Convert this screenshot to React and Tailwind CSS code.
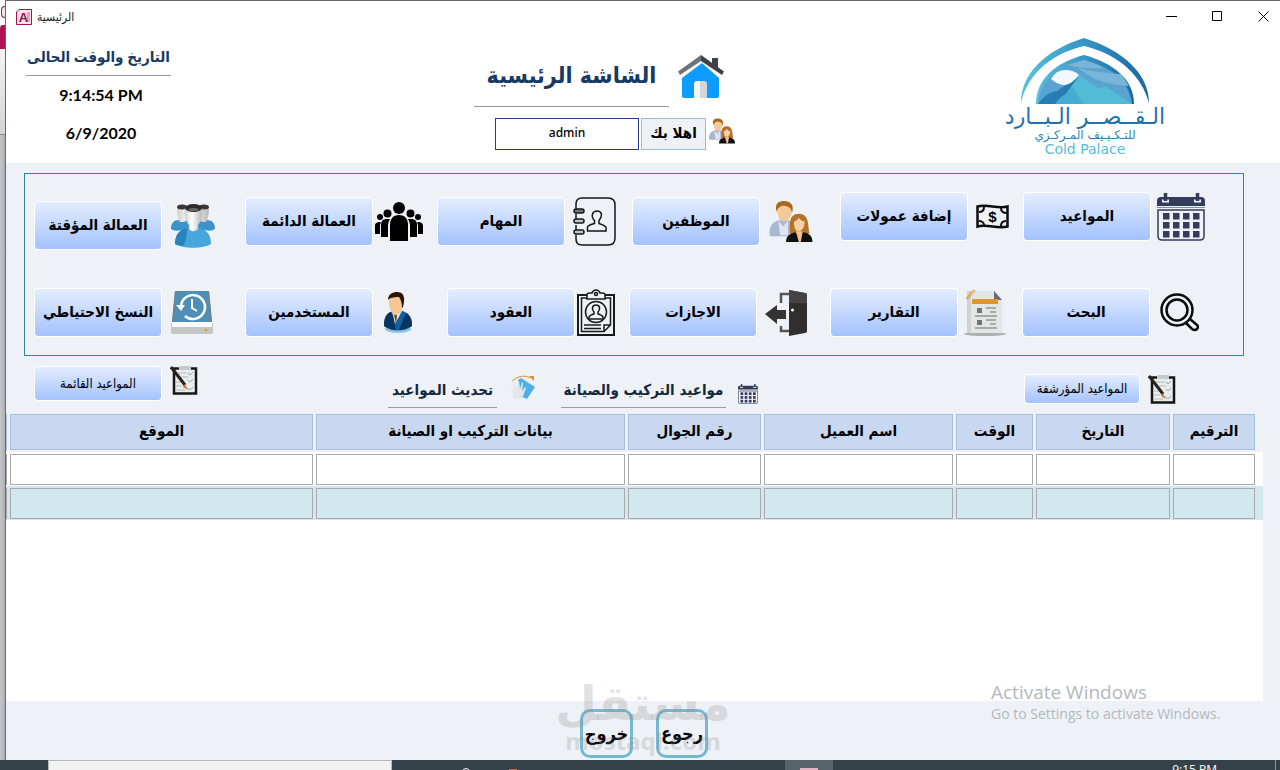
import React, { useState } from 'react';
import clsx from 'clsx';

const HomeIcon = () => (
  <svg className="h-[46px] w-[48px] shrink-0" viewBox="0 0 48 46">
    <path d="M34 4h6v14l-6-6z" fill="#3f4143" />
    <path d="M24 9 41 24v18a2 2 0 0 1-2 2H6a2 2 0 0 1-2-2V24z" fill="#0c9bff" />
    <path d="M0 21 23 4l23 17" fill="none" stroke="#fff" strokeWidth="5" />
    <path d="M34 4h6v12l-6-5z" fill="#3f4143" />
    <path d="M0 17.500 23 1v6L2 21z" fill="#707376" />
    <path d="M23 1 46 17.500 44 21 23 7z" fill="#3f4143" />
    <path d="M16 44V30q0-3 3-3h4v17z" fill="#f4f4f4" />
    <path d="M22 27h4q3 0 3 3v14h-7z" fill="#d3d5d8" />
  </svg>
);

const CoupleIcon = ({ className }) => (
  <svg className={clsx('shrink-0', className)} viewBox="0 0 46 44">
    <path d="M1 36c0-9 2-13 9-15l6-2 7 3v15H4c-2 0-3 0-3-1z" fill="#a9b8d2" />
    <path d="m10 21 5 6 5-6v15h-8z" fill="#dfe5ef" />
    <path d="M9 9c0 9 3 13 7 13s8-5 8-13c0-4-14-5-15 0z" fill="#f3c99a" />
    <path d="M8 12C6 3 11 1 16 1c6 0 11 4 8 12-1-5-3-6-8-7-4 0-6 2-8 6z" fill="#a8691d" />
    <path d="M22 34c0-8-2-20 9-20s9 12 11 20l-6 2H26z" fill="#b4722a" />
    <path d="M26 22c0 7 2 10 5 10s6-4 6-10c-3 0-5-2-6-4-1 2-3 4-5 4z" fill="#f6cfa2" />
    <path d="M18 43c0-6 3-8 9-10l4 3 4-3c7 1 10 4 10 10z" fill="#101010" />
    <path d="m28 32 3 11h2l2-11z" fill="#f0c08e" />
  </svg>
);

const WorkersIcon = () => (
  <svg className="h-[45px] w-[46px] shrink-0" viewBox="0 0 46 45">
    <defs>
      <linearGradient id="head">
        <stop offset="0" stopColor="#d0d0d0" />
        <stop offset="0.400" stopColor="#ffffff" />
        <stop offset="1" stopColor="#b9b9b9" />
      </linearGradient>
    </defs>
    <path d="M1 26c0-6 3-9 8-9h28c5 0 8 3 8 9-3 2-6 2-10 1H11c-4 1-7 1-10-1z" fill="#3a93ca" />
    <path d="M7 4h10v13l-3 2h-4c-2-3-3-8-3-15zM29 4h10c0 7-1 12-3 15h-4l-3-2z" fill="url(#head)" />
    <ellipse cx="12" cy="4" rx="5" ry="2.500" fill="#393637" />
    <ellipse cx="34" cy="4" rx="5" ry="2.500" fill="#393637" />
    <path d="M5 41c0-10 5-15 13-16h10c8 1 13 6 13 16-8 5-28 5-36 0z" fill="#47a7dc" />
    <path d="M5 41c0-10 5-15 13-16-2 5-1 13-5 18-4-1-7-1-8-2z" fill="#2c83b9" />
    <path d="M15 5h17c0 9-1 13-4 17v4c-3 3-7 3-9 0v-4c-3-4-4-8-4-17z" fill="url(#head)" stroke="#b5b7ba" strokeWidth="0.500" />
    <ellipse cx="23.500" cy="5" rx="8.500" ry="4" fill="#2d2a2b" />
    <ellipse cx="23.500" cy="6.500" rx="5" ry="1.500" fill="#6d6a6a" />
  </svg>
);

const CrowdIcon = () => (
  <svg className="h-[41px] w-[48px] shrink-0" viewBox="0 0 48 41">
    <circle cx="24" cy="7" r="6" />
    <path d="M15 40V24c0-6 3-10 9-10s9 4 9 10v16z" />
    <circle cx="12.500" cy="12.500" r="4" />
    <circle cx="35.500" cy="12.500" r="4" />
    <path d="M6 36V24c0-4 2-6 6-6h3c-1 2-2 4-2 7v11zM42 36V24c0-4-2-6-6-6h-3c1 2 2 4 2 7v11z" />
    <circle cx="5" cy="16" r="3" />
    <circle cx="43" cy="16" r="3" />
    <path d="M0 33v-8c0-3 2-4 5-4l1 1c-1 1-1 2-1 4v7zM48 33v-8c0-3-2-4-5-4l-1 1c1 1 1 2 1 4v7z" />
  </svg>
);

const NotebookIcon = () => (
  <svg className="h-[49px] w-[43px] shrink-0" viewBox="0 0 43 49" fill="none" stroke="#161616" strokeWidth="1.500">
    <path d="M3 12V7q0-6 6-6h26q7 0 7 7v33q0 7-7 7H9q-6 0-6-6v-4M3 17v5M3 28v5" />
    <rect x="1" y="12" width="10" height="4" rx="2" fill="#777" />
    <rect x="1" y="22" width="10" height="4" rx="2" fill="#c4c4c4" />
    <rect x="1" y="33" width="10" height="4" rx="2" fill="#c4c4c4" />
    <path d="M14.500 34v-4q1-2 7-3.500v-3q-3-3-2-6.500 1-3 4.500-3t4.500 3q0 4-2.500 6.500v3q5 1.500 7 3.500v4z" />
  </svg>
);

const MoneyIcon = () => (
  <svg className="h-[25px] w-[33px] shrink-0" viewBox="0 0 33 25">
    <path d="M1.500 2.500c10-3 20 3 30 0v20c-10 3-20-3-30 0z" fill="none" stroke="#0c0c0c" strokeWidth="2.500" />
    <path d="M3 8c3 0 5-2 5-5M25 4c0 3 2 5 6 5M3 17c3 0 5 2 5 4M30 17c-3 0-5 2-5 5" fill="none" stroke="#0c0c0c" strokeWidth="2" />
    <text x="16.500" y="18" textAnchor="middle" fontFamily="Liberation Sans" fontWeight="bold" fontSize="15">$</text>
  </svg>
);

const CalendarIcon = ({ className }) => (
  <svg className={clsx('shrink-0', className)} viewBox="0 0 48 48">
    <path d="M0 13V8q0-4 4-4h40q4 0 4 4v5z" fill="#343b5c" />
    <path d="M0 14.500h48" stroke="#7794a5" />
    <path d="M1 17v26q0 4 4 4h38q4 0 4-4V17z" fill="#f0f2f7" stroke="#343b5c" strokeWidth="1.500" />
    <path d="M5 8h7M37 8h7" stroke="#eef1f6" strokeWidth="3" />
    <path d="M8.500 0v8M40.500 0v8" stroke="#343b5c" strokeWidth="3.500" />
    {[20, 29, 38].map((y) =>
      [6, 16, 26, 36].map((x) => <rect key={`${x}-${y}`} x={x} y={y} width="6.500" height="6.500" fill="#343b5c" />)
    )}
  </svg>
);

const BackupIcon = () => (
  <svg className="h-[46px] w-[44px] shrink-0" viewBox="0 0 44 46">
    <path d="M1 33h42v9q0 2-2 2H3q-2 0-2-2z" fill="#c4c6c5" />
    <path d="M2 32h40v5H2z" fill="#fafafa" />
    <path d="M5 1h34l3 31H2z" fill="#4f8eb7" />
    <path d="M5 1 2 32h2L7 1zM37 1l3 31h2L39 1z" fill="#6d8492" />
    <path d="M11 17a12 12 0 1 1 4 9" fill="none" stroke="#fff" strokeWidth="2.500" />
    <path d="M6 15h9l-4 6z" fill="#fff" />
    <path d="M22 9v9l5 3" fill="none" stroke="#fff" strokeWidth="2" />
    <circle cx="36" cy="40" r="1.500" fill="#e6a13a" />
  </svg>
);

const UserIcon = () => (
  <svg className="h-[42px] w-[30px] shrink-0" viewBox="0 0 30 42">
    <ellipse cx="15" cy="37" rx="13" ry="4" fill="#8fc3e2" />
    <path d="M1 34c0-8 2-13 9-15h10c7 3 9 7 9 15-8 6-20 6-28 0z" fill="#14609f" />
    <path d="M1 34c0-8 2-13 9-15l3 19c-5 0-9-2-12-4zM29 34c0-7-2-11-6-13l-7 17c5 0 9-2 13-4z" fill="#0b3560" />
    <path d="m9 19 3 13 7-13-2-3h-8z" fill="#dfe9f3" />
    <path d="m11 23 2 9 1-9-2-2z" fill="#6d4120" />
    <path d="M6 9c0 9 3 14 7 14s7-5 7-14c-3-6-12-6-14 0z" fill="#f6c591" />
    <path d="M5 8C5 2 10 0 14 0c6 0 9 4 6 15l-1 1c0-5-1-8-3-11-3 0-8 0-11 3z" fill="#2b1507" />
  </svg>
);

const ContractIcon = () => (
  <svg className="h-[47px] w-[38px] shrink-0" viewBox="0 0 38 47" fill="none" stroke="#1a1a1a" strokeWidth="1.500">
    <path d="M10 6H1v40h36V6h-9" strokeWidth="2" />
    <path d="M10 9H4.500v33.500H27l6.500-6.500V9H28M27 42v-6h6" />
    <path d="M10 10V6q0-2 3-2h2q1-3 4-3t4 3h2q3 0 3 2v4z" />
    <circle cx="19" cy="5" r="1.500" />
    <circle cx="19" cy="23" r="10.500" />
    <path d="M12 30v-2q1-2 5-3v-2q-2-2-1.500-4.500T19 16t3.500 2.500T21 23v2q4 1 5 3v2zM7 36h17M7 39.500h17" />
  </svg>
);

const ExitDoorIcon = () => (
  <svg className="h-[46px] w-[42px] shrink-0" viewBox="0 0 42 46">
    <path d="M16 13V4h8M16 36v5h8" fill="none" stroke="#555" strokeWidth="2.500" />
    <path d="m24 0 16 3q2 0 2 2v36q0 2-2 2l-16 3z" fill="#302e2e" />
    <path d="m24 0 16 3q2 0 2 2v8H24z" fill="#454343" />
    <path d="M0 24 12 15v5h9v9h-9v5z" fill="#353233" />
    <circle cx="27.500" cy="20" r="1.500" fill="#fff" />
  </svg>
);

const ReportIcon = () => (
  <svg className="h-[47px] w-[42px] shrink-0" viewBox="0 0 42 47">
    <ellipse cx="21" cy="45" rx="21" ry="2" fill="#aeb0b1" />
    <path d="M3 2h28l7 8v34H3z" fill="#e4e6e6" />
    <path d="M3 2h4v42H3z" fill="#cfd2d1" />
    <path d="m30 2 8 9h-8z" fill="#696b6c" />
    <path d="M8 10h26v5H8z" fill="#e0962c" />
    <path d="M13 19h5v5h-5zM13 31h5v5h-5z" fill="#747474" />
    <path d="M22 19h10M26 23h6M11 27h22M22 31h10M26 35h6M11 39h22" stroke="#949697" strokeWidth="1.500" />
    <path d="m2 10 6-8q2-2 3 0L5 9q-1 1-2 0l5-6" fill="none" stroke="#e09a3b" />
  </svg>
);

const SearchIcon = () => (
  <svg className="h-[39px] w-[39px] shrink-0" viewBox="0 0 39 39" fill="none" stroke="#0a0a0a" strokeWidth="2.500">
    <circle cx="17" cy="17" r="15.500" />
    <circle cx="17" cy="17" r="10.500" />
    <path d="m26 30 6 6q3 2 5 0t0-4l-7-6" />
  </svg>
);

const ChecklistIcon = () => (
  <svg className="h-[29px] w-[28px] shrink-0" viewBox="0 0 28 29">
    <path d="M4 2.500h22v25H4z" fill="#e9ebec" stroke="#161616" strokeWidth="2.500" />
    <path d="M9 0h12v4H9z" fill="#c7cacb" />
    <path d="M8 7h9M11 11h7M6 16h5M6 20h6M6 24h9" stroke="#b7bbbd" />
    <path d="m18 7 2 2 3-3m-5 8 2 2 3-3m-5 9 2 2 3-3" fill="none" stroke="#79abc9" />
    <path d="m1 1 14 18" stroke="#26221f" strokeWidth="3" />
    <path d="m15 18 3 6-5-3z" fill="#c07d3e" />
  </svg>
);

const RefreshHandIcon = () => (
  <svg className="h-[25px] w-[24px] shrink-0" viewBox="0 0 24 25">
    <path d="m7 5 3-2 14 9-8 12-9-4z" fill="#4fb0e6" />
    <path d="M3 24q-1-5-3-9l1-1 3 3L2 9l1-1 3 6V6h2l1 8 2-7 1 1-1 8 3-4 1 1-3 8q-1 3-4 3z" fill="#e3e7ea" />
    <path d="M1 6q9-8 19-3" fill="none" stroke="#dd9335" />
    <path d="m18 1 5 0v5z" fill="#dd9335" />
  </svg>
);

const PalaceLogo = () => (
  <svg className="h-[67px] w-[128px]" viewBox="0 0 128 67">
    <defs>
      <linearGradient id="arch">
        <stop offset="0" stopColor="#56c4dc" />
        <stop offset="0.500" stopColor="#3794c4" />
        <stop offset="1" stopColor="#1768a6" />
      </linearGradient>
    </defs>
    <path d="M0 65C0 36 24 12 63 0c39 12 65 36 65 65C121 39 100 17 63 8 26 17 6 39 0 65z" fill="url(#arch)" />
    <path d="M15 66c0-24 18-41 48-49 30 8 50 25 50 49z" fill="url(#arch)" />
    <path d="M17 66c1-22 18-37 46-44 27 7 45 20 48 44z" fill="#5aa3d1" />
    <path d="M56 30q22 5 44 6l8 12q-18-1-34-7zM46 27l17-5q10 3 20 8-20 1-37-3z" fill="#79b4d9" />
    <path d="M17 66q12-2 24-15l17-14 20 14 6-3 27 18z" fill="#52bcd7" />
    <path d="M20 62q7-8 16-9l22-15-13 18-8 10H17z" fill="#277db3" />
    <path d="M34 66q6-9 12-10l6-7 5 9 6 8z" fill="#46abd0" />
    <path d="M30 41q5-9 14-9t14 5q-7 9-14 10-7 0-14-6z" fill="#f2f8fd" />
  </svg>
);

const topMenu = [
  { label: 'العمالة المؤقتة', icon: <WorkersIcon />, gap: 'gap-2', align: 'items-center self-end' },
  { label: 'العمالة الدائمة', icon: <CrowdIcon />, gap: 'gap-[2px]', align: 'items-center self-center' },
  { label: 'المهام', icon: <NotebookIcon />, gap: 'gap-2', align: 'items-center self-center' },
  { label: 'الموظفين', icon: <CoupleIcon className="h-[43px] w-[46px]" />, gap: 'gap-2', align: 'items-center self-center' },
  { label: 'إضافة عمولات', icon: <MoneyIcon />, gap: 'gap-2', align: 'items-center self-start' },
  { label: 'المواعيد', icon: <CalendarIcon className="size-12" />, gap: 'gap-[6px]', align: 'items-center self-start' },
];

const bottomMenu = [
  { label: 'النسخ الاحتياطي', icon: <BackupIcon />, gap: 'gap-2' },
  { label: 'المستخدمين', icon: <UserIcon />, gap: 'gap-[10px]' },
  { label: 'العقود', icon: <ContractIcon />, gap: 'gap-[2px]' },
  { label: 'الاجازات', icon: <ExitDoorIcon />, gap: 'gap-2' },
  { label: 'التقارير', icon: <ReportIcon />, gap: 'gap-[6px]' },
  { label: 'البحث', icon: <SearchIcon />, gap: 'gap-[10px]' },
];

const columns = [
  { label: 'الموقع', width: '' },
  { label: 'بيانات التركيب او الصيانة', width: 'w-[312px]' },
  { label: 'رقم الجوال', width: 'w-[136px]' },
  { label: 'اسم العميل', width: 'w-[192px]' },
  { label: 'الوقت', width: 'w-[80px]' },
  { label: 'التاريخ', width: 'w-[137px]' },
  { label: 'الترقيم', width: 'w-[85px]' },
];

const GradientButton = ({ className, children }) => (
  <button
    type="button"
    dir="rtl"
    className={clsx(
      'shrink-0 whitespace-nowrap rounded-[4px] border border-white bg-linear-to-b from-[#e4edff] to-[#a4c2ff] text-black',
      className
    )}
  >
    {children}
  </button>
);

const MenuItem = ({ label, icon, gap, align = 'items-center' }) => (
  <div className={clsx('flex', gap, align)}>
    <GradientButton className="h-[49px] w-32 text-[15px] font-bold">{label}</GradientButton>
    {icon}
  </div>
);

const TitleBar = () => (
  <div className="flex h-[31px] items-center pl-[10px] pr-px">
    <svg className="size-4" viewBox="0 0 16 16">
      <path d="M3 .500h12.500v15H.500V3z" fill="#f6e3ea" stroke="#a4124c" />
      <path d="M11 3h3v10h-3z" fill="#f19cba" />
      <text x="7.500" y="13" textAnchor="middle" fontFamily="Liberation Sans" fontWeight="bold" fontSize="13" fill="#8d0f45">A</text>
    </svg>
    <span dir="rtl" className="ml-[5px] text-[12px] text-[#222]">الرئيسية</span>
    <div className="ml-auto flex gap-[14px]">
      <button type="button" aria-label="Minimize" className="flex size-8 items-center justify-center">
        <svg className="size-[11px]" viewBox="0 0 11 11"><path d="M0 5.500h11" stroke="#000" /></svg>
      </button>
      <button type="button" aria-label="Maximize" className="flex size-8 items-center justify-center">
        <svg className="size-[11px]" viewBox="0 0 11 11"><path d="M.500.500h9v9h-9z" fill="none" stroke="#000" /></svg>
      </button>
      <button type="button" aria-label="Close" className="flex size-8 items-center justify-center">
        <svg className="size-[11px]" viewBox="0 0 11 11"><path d="m.500.500 10 10m0-10-10 10" stroke="#000" /></svg>
      </button>
    </div>
  </div>
);

const Header = () => {
  const [user, setUser] = useState('admin');

  return (
    <header className="bg-white">
      <TitleBar />
      <div className="grid h-[131px] grid-cols-[468fr_523fr_283fr]">
        <div className="pl-5 pt-2">
          <div className="w-[150px] font-['Lato','DejaVu_Sans_Condensed',sans-serif] font-bold">
            <h2 dir="rtl" className="h-9 w-[145px] whitespace-nowrap border-b border-[#9b9b9b] text-center text-[15px] leading-8 text-[#173a63]">التاريخ والوقت الحالى</h2>
            <p className="text-center text-[16px] leading-[38px]">9:14:54 PM</p>
            <p className="text-center text-[16px] leading-[38px]">6/9/2020</p>
          </div>
        </div>

        <div className="pt-[22px]">
          <div className="flex gap-[9px]">
            <h1 dir="rtl" className="h-[53px] w-[195px] whitespace-nowrap border-b border-[#9b9b9b] text-center text-[23px] font-bold leading-[42px] text-[#173a63]">
              الشاشة الرئيسية
            </h1>
            <HomeIcon />
          </div>
          <div className="mt-[11px] flex gap-[2px] pl-[21px]">
            <input
              id="user"
              value={user}
              onChange={(e) => setUser(e.target.value)}
              className="h-8 w-36 border border-[#2a3990] bg-white pb-1 text-center font-['Noto_Sans',sans-serif] text-[12px] font-medium"
            />
            <label htmlFor="user" dir="rtl" className="h-8 w-[65px] border border-[#98bcd2] bg-[#eef1f6] text-center text-[15px] font-bold leading-7">
              اهلا بك
            </label>
            <CoupleIcon className="h-[26px] w-7" />
          </div>
        </div>

        <div>
          <div className="flex w-44 flex-col items-center pt-[6px]">
            <PalaceLogo />
            <p dir="rtl" className="whitespace-nowrap font-['DejaVu_Sans',sans-serif] text-[22px] leading-6 text-[#2273ad]">الـقــصــر الـبــارد</p>
            <p dir="rtl" className="whitespace-nowrap font-['DejaVu_Sans',sans-serif] text-[12px] leading-3 text-[#2f86b9]">للتـكـيـيف المـركـزي</p>
            <p className="font-['DejaVu_Sans',sans-serif] text-[14px] leading-4 text-[#55bdd8]">Cold Palace</p>
          </div>
        </div>
      </div>
    </header>
  );
};

const Toolbar = () => (
  <div className="grid h-[58px] grid-cols-[354fr_636fr_256fr] pl-7">
    <div className="flex gap-2 self-start pt-[10px]">
      <GradientButton className="h-[35px] w-32 text-[13px]">المواعيد القائمة</GradientButton>
      <ChecklistIcon />
    </div>
    <div className="flex items-end pb-[6px]">
      <a href="#refresh" dir="rtl" className="h-9 w-[109px] whitespace-nowrap border-b border-[#9b9b9b] text-center text-[15px] font-bold leading-9 text-[#14283c]">
        تحديث المواعيد
      </a>
      <div className="ml-[14px] pb-2"><RefreshHandIcon /></div>
      <h2 dir="rtl" className="ml-[26px] h-9 w-[165px] whitespace-nowrap border-b border-[#9b9b9b] text-center text-[15px] font-bold leading-9 text-[#14283c]">
        مواعيد التركيب والصيانة
      </h2>
      <CalendarIcon className="mb-1 ml-3 size-5" />
    </div>
    <div className="flex items-center gap-2 pt-2">
      <GradientButton className="h-[30px] w-[116px] text-[13px]">المواعيد المؤرشفة</GradientButton>
      <ChecklistIcon />
    </div>
  </div>
);

const AppointmentsTable = () => (
  <div className="mr-[17px] flex-1 bg-white">
    <table className="w-full table-fixed border-collapse">
      <colgroup>
        <col className="w-1" />
        {columns.map((col) => (
          <col key={col.label} className={col.width} />
        ))}
        <col className="w-[5px]" />
      </colgroup>
      <thead>
        <tr className="bg-[#eef1f6]">
          <td className="p-0 pb-[2px]"><div className="h-9 w-px bg-[#a9bfe0]" /></td>
          {columns.map((col) => (
            <th key={col.label} className="p-0 pb-[2px] pr-[3px]">
              <div dir="rtl" className="h-9 whitespace-nowrap border border-[#a9bfe0] bg-[#c7d8f0] text-[15px] font-bold leading-8">{col.label}</div>
            </th>
          ))}
          <td className="p-0" />
        </tr>
      </thead>
      <tbody>
        {['bg-white', 'bg-[#d1e9ee]'].map((bg, row) => (
          <tr key={row} className={bg}>
            <td className="p-0 pb-px pt-[2px]"><div className="h-[31px] w-px bg-[#a9a9ad]" /></td>
            {columns.map((col) => (
              <td key={col.label} className="p-0 pb-px pr-[3px] pt-[2px]">
                <input aria-label={col.label} dir="rtl" className="block h-[31px] w-full border border-[#a9a9ad] bg-transparent px-1" />
              </td>
            ))}
            <td className="p-0" />
          </tr>
        ))}
      </tbody>
    </table>
  </div>
);

const Footer = () => (
  <footer className="relative flex h-[59px] items-center justify-center gap-[23px] pl-[2px] pt-[6px]">
    <button type="button" className="h-[49px] w-[53px] rounded-[10px] border-[3px] border-[#74b8d4] text-[18px] font-bold">خروج</button>
    <button type="button" className="h-[49px] w-[52px] rounded-[10px] border-[3px] border-[#74b8d4] text-[18px] font-bold">رجوع</button>
    <div className="pointer-events-none absolute bottom-1 left-1/2 -translate-x-1/2 text-center font-bold text-[#8c8c8c]/25">
      <div dir="rtl" className="whitespace-nowrap font-['DejaVu_Sans',sans-serif] text-[48px] leading-[46px]">مستقل</div>
      <div className="font-['Open_Sans',sans-serif] text-[24px] leading-[30px]">mostaql.com</div>
    </div>
    <div className="pointer-events-none absolute bottom-9 right-[53px] w-[236px] whitespace-nowrap font-['Open_Sans',sans-serif] text-[#b4b8bd]">
      <p className="text-[19px] leading-6">Activate Windows</p>
      <p className="text-[14px] leading-5">Go to Settings to activate Windows.</p>
    </div>
  </footer>
);

const Taskbar = () => (
  <div className="flex h-[10px] shrink-0 overflow-hidden bg-[#35424a]">
    <div className="ml-12 w-[344px] border border-b-0 border-[#b5b8b8] bg-[#f2f2f2]" />
    <div className="ml-[70px] mt-2 size-2 rounded-full border border-white" />
    <div className="ml-[39px] mt-[9px] h-1 w-2 bg-[#b0745c]" />
    <div className="ml-[268px] w-12 bg-[#57636b] px-[15px] pt-2">
      <div className="h-2 bg-[#e4b4c4]" />
    </div>
    <span className="ml-auto mt-[2px] font-['Open_Sans',sans-serif] text-[12px] leading-4 text-white">9:15 PM</span>
    <div className="ml-[58px] mr-1 w-px bg-[#8a9297]" />
  </div>
);

const App = () => (
  <div className="flex min-h-screen flex-col bg-[#eef1f6] font-['DejaVu_Sans_Condensed','DejaVu_Sans',sans-serif]">
    <div className="flex flex-1">
      {/* edge of the window behind */}
      <div className="w-[5px] shrink-0 bg-linear-to-r from-[#c5c6c9] to-[#aeb0b4]">
        <div className="h-[25px] bg-white pt-[6px]">
          <div className="ml-px h-3 rounded-l-sm border border-r-0 border-[#a4124c] bg-[#f6e3ea]" />
        </div>
        <div className="h-6 rounded-tl-sm bg-[#b01253]" />
        <div className="h-[86px] border-b border-[#85878c] bg-linear-to-b from-[#f5f5f6] to-[#d2d3d6]" />
      </div>

      <main className="flex min-w-0 flex-1 flex-col border-l border-t border-[#68686c]">
        <Header />

        <nav className="ml-[18px] mr-9 mt-[10px] flex flex-col gap-[38px] border border-[#2f87a0] py-[18px] pl-[9px]">
          <div className="grid h-[58px] grid-cols-[211fr_192fr_195fr_208fr_183fr_220fr]">
            {topMenu.map((item) => (
              <MenuItem key={item.label} {...item} />
            ))}
          </div>
          <div className="grid grid-cols-[211fr_202fr_182fr_201fr_192fr_221fr]">
            {bottomMenu.map((item) => (
              <MenuItem key={item.label} {...item} />
            ))}
          </div>
        </nav>

        <Toolbar />
        <AppointmentsTable />
        <Footer />
      </main>
    </div>
    <Taskbar />
  </div>
);

export default App;
